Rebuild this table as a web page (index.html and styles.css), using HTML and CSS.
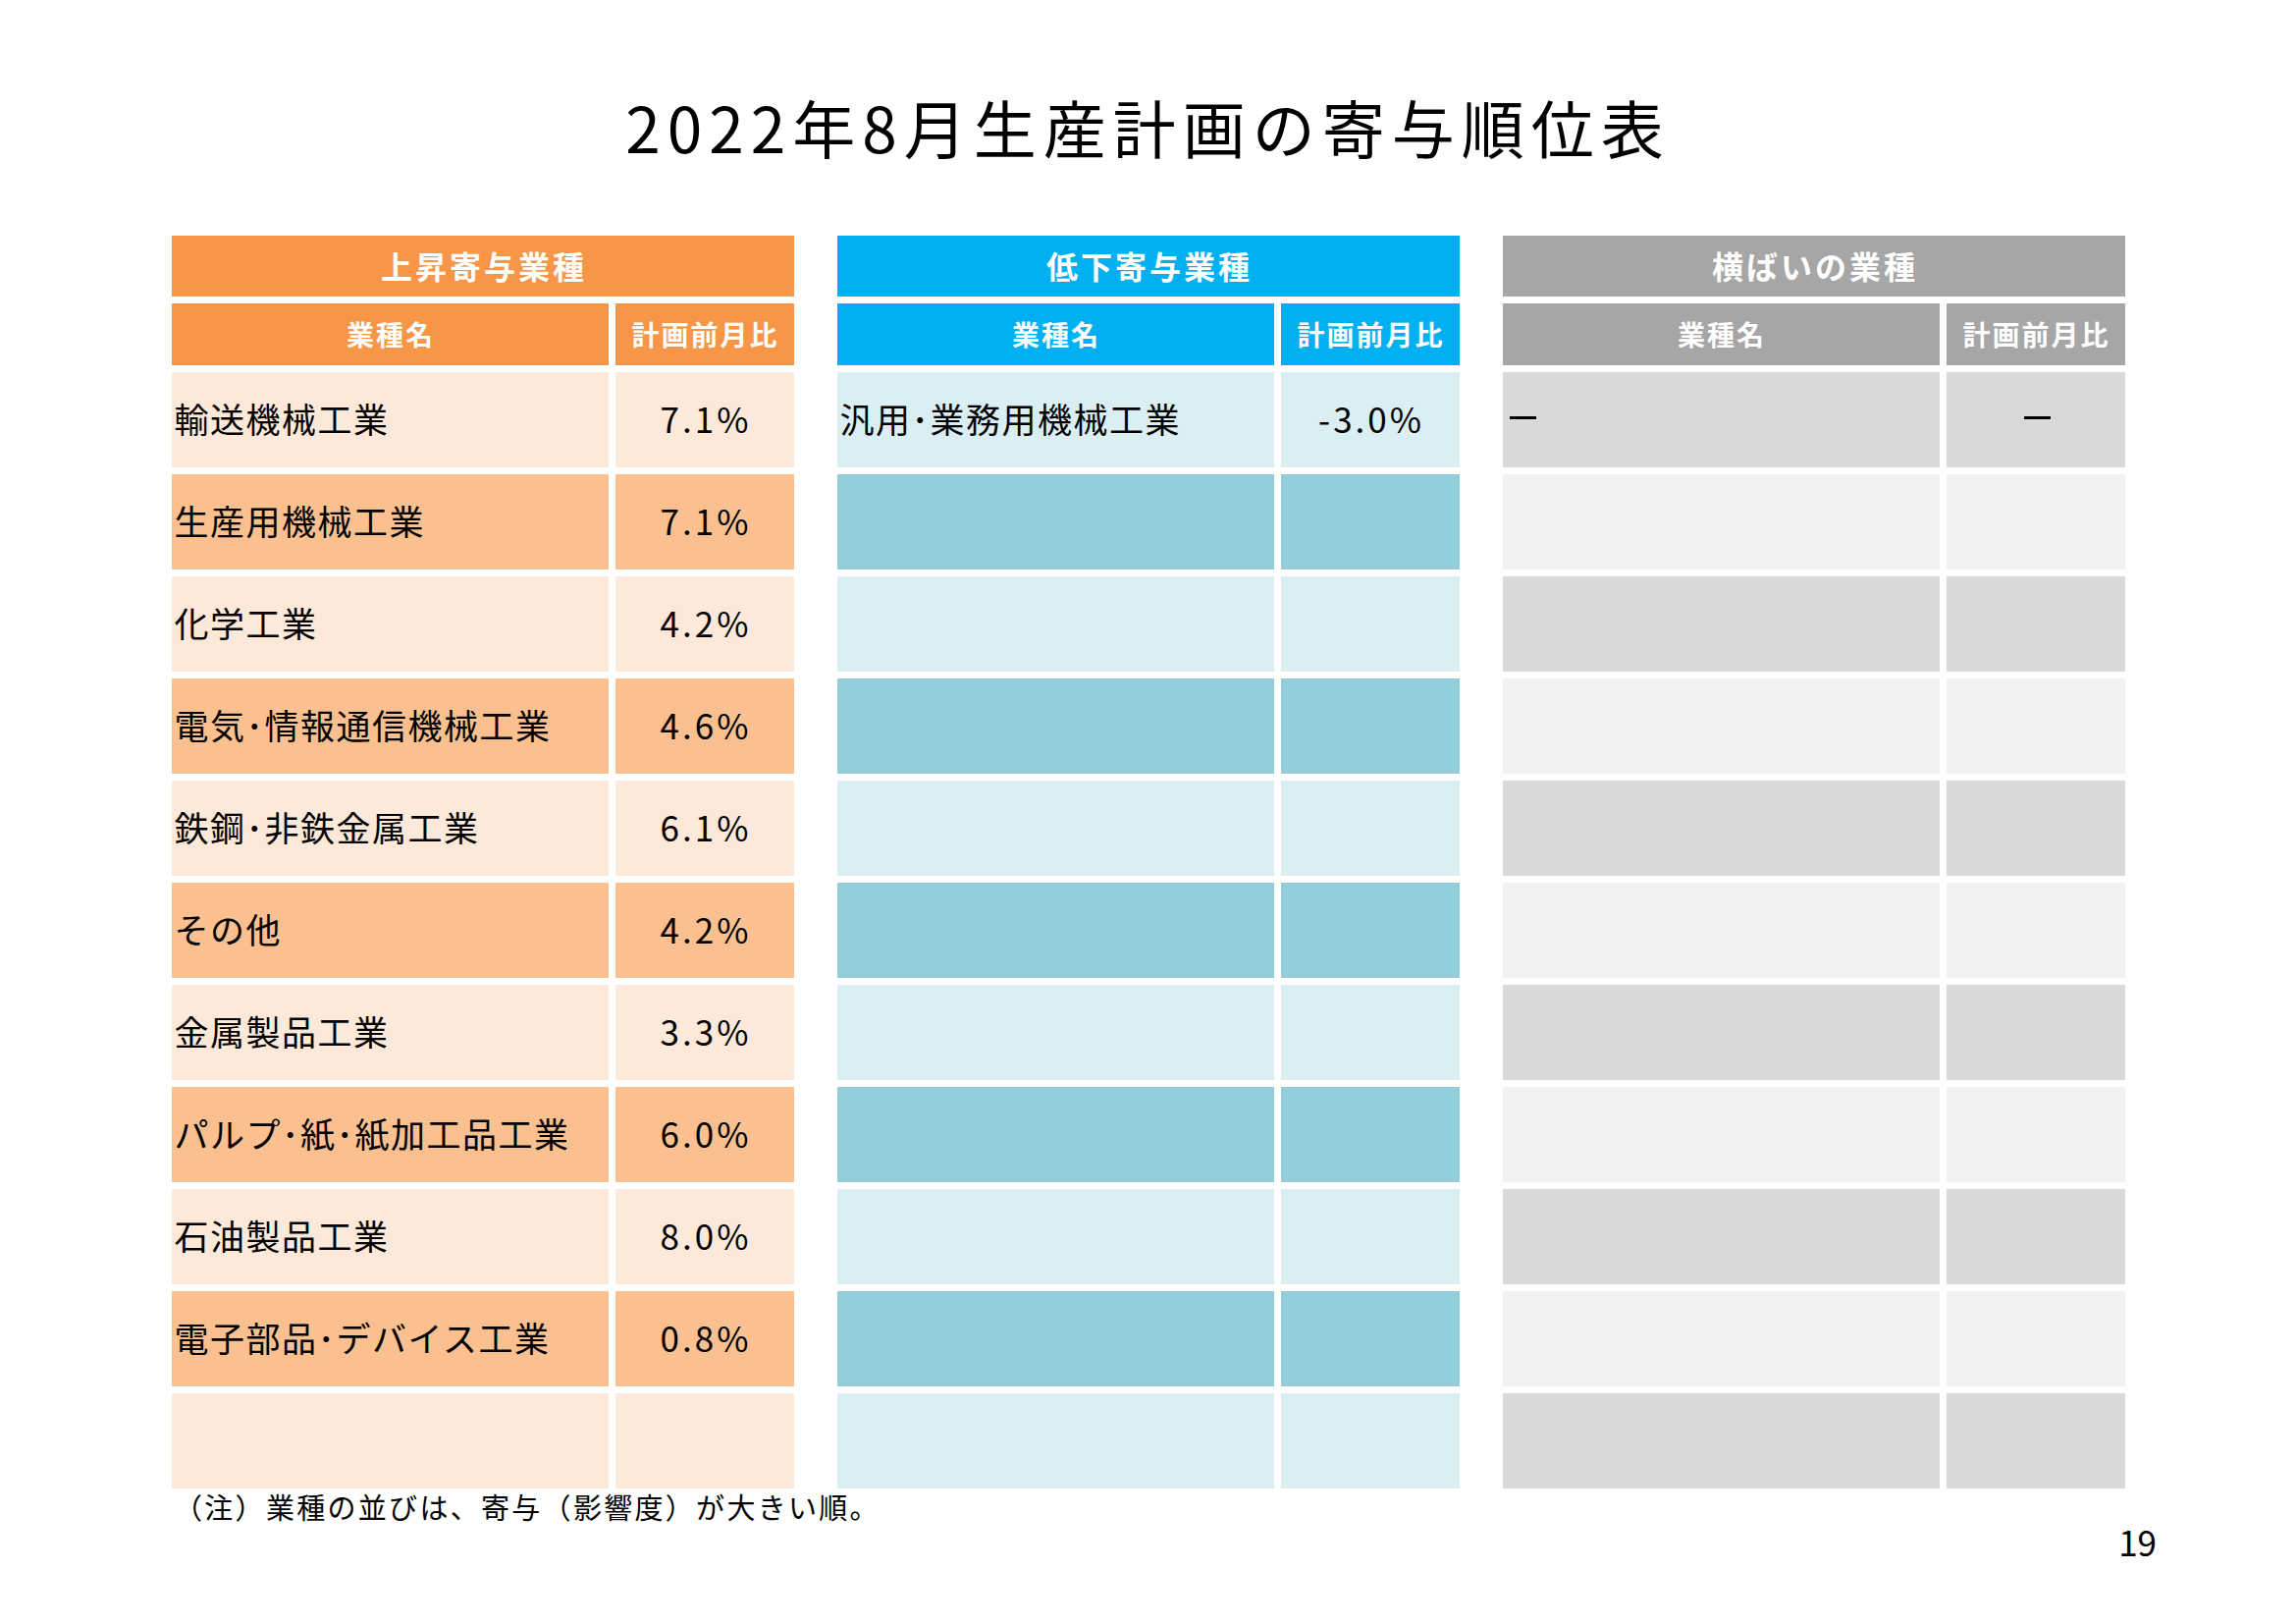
FILE: index.html
```html
<!DOCTYPE html>
<html lang="ja">
<head>
<meta charset="utf-8">
<title>2022年8月生産計画の寄与順位表</title>
<link rel="stylesheet" href="styles.css">
</head>
<body>
<div class="page">
  <h1 class="title">2022年8月生産計画の寄与順位表</h1>
  <div class="tables">
    <section class="panel up">
      <div class="h1">上昇寄与業種</div>
      <div class="h2">業種名</div><div class="h2">計画前月比</div>
      <div class="c name odd">輸送機械工業</div><div class="c val odd">7.1%</div>
      <div class="c name even">生産用機械工業</div><div class="c val even">7.1%</div>
      <div class="c name odd">化学工業</div><div class="c val odd">4.2%</div>
      <div class="c name even">電気･情報通信機械工業</div><div class="c val even">4.6%</div>
      <div class="c name odd">鉄鋼･非鉄金属工業</div><div class="c val odd">6.1%</div>
      <div class="c name even">その他</div><div class="c val even">4.2%</div>
      <div class="c name odd">金属製品工業</div><div class="c val odd">3.3%</div>
      <div class="c name even">パルプ･紙･紙加工品工業</div><div class="c val even">6.0%</div>
      <div class="c name odd">石油製品工業</div><div class="c val odd">8.0%</div>
      <div class="c name even">電子部品･デバイス工業</div><div class="c val even">0.8%</div>
      <div class="c name odd"></div><div class="c val odd"></div>
    </section>
    <section class="panel down">
      <div class="h1">低下寄与業種</div>
      <div class="h2">業種名</div><div class="h2">計画前月比</div>
      <div class="c name odd">汎用･業務用機械工業</div><div class="c val odd">-3.0%</div>
      <div class="c name even"></div><div class="c val even"></div>
      <div class="c name odd"></div><div class="c val odd"></div>
      <div class="c name even"></div><div class="c val even"></div>
      <div class="c name odd"></div><div class="c val odd"></div>
      <div class="c name even"></div><div class="c val even"></div>
      <div class="c name odd"></div><div class="c val odd"></div>
      <div class="c name even"></div><div class="c val even"></div>
      <div class="c name odd"></div><div class="c val odd"></div>
      <div class="c name even"></div><div class="c val even"></div>
      <div class="c name odd"></div><div class="c val odd"></div>
    </section>
    <section class="panel flat">
      <div class="h1">横ばいの業種</div>
      <div class="h2">業種名</div><div class="h2">計画前月比</div>
      <div class="c name odd"><span class="dash"></span></div><div class="c val odd"><span class="dash"></span></div>
      <div class="c name even"></div><div class="c val even"></div>
      <div class="c name odd"></div><div class="c val odd"></div>
      <div class="c name even"></div><div class="c val even"></div>
      <div class="c name odd"></div><div class="c val odd"></div>
      <div class="c name even"></div><div class="c val even"></div>
      <div class="c name odd"></div><div class="c val odd"></div>
      <div class="c name even"></div><div class="c val even"></div>
      <div class="c name odd"></div><div class="c val odd"></div>
      <div class="c name even"></div><div class="c val even"></div>
      <div class="c name odd"></div><div class="c val odd"></div>
    </section>
  </div>
  <p class="note">（注）業種の並びは、寄与（影響度）が大きい順。</p>
  <div class="pnum">19</div>
</div>
</body>
</html>
```
FILE: styles.css
```css
html, body {
  margin: 0;
  padding: 0;
  background: #ffffff;
}
body {
  font-family: "Noto Sans CJK JP", "Noto Sans", sans-serif;
  color: #000000;
}
.page {
  width: 2339px;
  height: 1654px;
  overflow: hidden;
}
.title {
  margin: 0;
  padding-top: 88px;
  font-size: 64px;
  line-height: 80px;
  font-weight: 400;
  letter-spacing: 7px;
  text-align: center;
}
.tables {
  width: 1990px;
  margin: 72px auto 0;
  display: flex;
  gap: 44px;
}
.panel {
  width: 634px;
  display: grid;
  grid-template-columns: 445px 182px;
  grid-template-rows: 62px 63px repeat(11, 97px);
  gap: 7px;
}
.h1 {
  grid-column: 1 / 3;
  display: flex;
  align-items: center;
  justify-content: center;
  color: #ffffff;
  font-weight: 700;
  font-size: 32px;
  letter-spacing: 3px;
  padding-left: 3px;
  padding-bottom: 3px;
}
.h2 {
  display: flex;
  align-items: center;
  justify-content: center;
  color: #ffffff;
  font-weight: 700;
  font-size: 28px;
  letter-spacing: 2px;
  padding-left: 2px;
  padding-bottom: 2px;
}
.c {
  display: flex;
  align-items: center;
  font-size: 35px;
  letter-spacing: 1.5px;
  white-space: nowrap;
  padding-bottom: 4px;
}
.name {
  padding-left: 3px;
}
.val {
  justify-content: center;
  letter-spacing: 3px;
  padding-left: 3px;
}
.dash {
  display: block;
  width: 27px;
  height: 3px;
  background: #000000;
}
.name .dash {
  margin-left: 4px;
}

.up .h1, .up .h2 { background: #f79646; }
.up .odd { background: #fde9d9; }
.up .even { background: #fac090; }

.down .h1, .down .h2 { background: #00b0f0; }
.down .odd { background: #daeef3; }
.down .even { background: #92cddc; }

.flat .h1, .flat .h2 { background: #a6a6a6; }
.flat .odd { background: #d9d9d9; }
.flat .even { background: #f2f2f2; }

.note {
  margin: 3px 0 0 177px;
  font-size: 29px;
  line-height: 30px;
  letter-spacing: 2.3px;
}
.pnum {
  text-align: right;
  padding-right: 142px;
  font-size: 35px;
  line-height: 40px;
  margin-top: 1px;
}
```
